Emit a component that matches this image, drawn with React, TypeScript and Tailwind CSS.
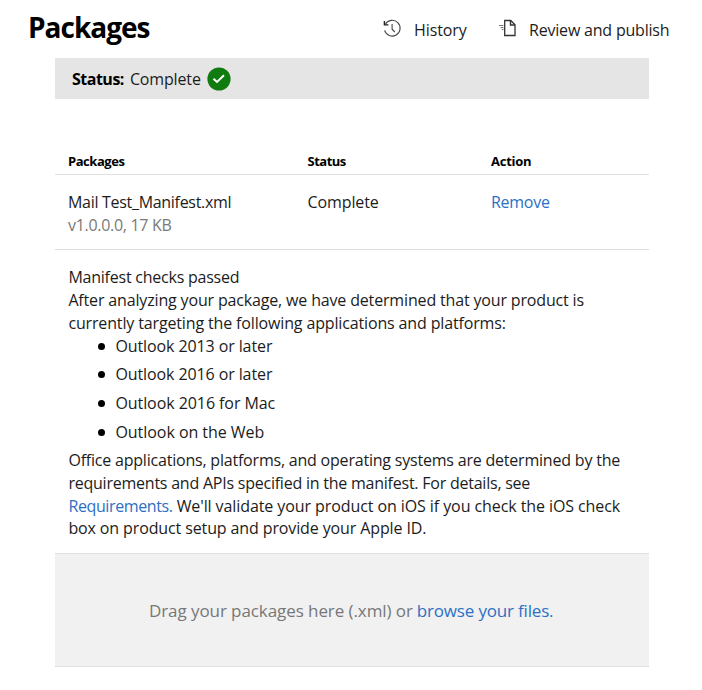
const platforms = [
  { name: 'Outlook 2013 or later', tracking: 'tracking-[-0.1px]' },
  { name: 'Outlook 2016 or later', tracking: 'tracking-[-0.1px]' },
  { name: 'Outlook 2016 for Mac', tracking: 'tracking-[-0.07px]' },
  { name: 'Outlook on the Web', tracking: 'tracking-[-0.04px]' },
];

function HistoryIcon() {
  return (
    <svg className="h-[19px] w-[19px]" viewBox="0 0 19 19" fill="none" stroke="#444" strokeWidth="1.1">
      <path d="M2.4 5.2A7.9 7.9 0 1 1 1.6 11.4" />
      <path d="M1.4 2v3.9h4" stroke="#222" strokeWidth="1.4" />
      <path d="M9.1 5v5.2l2.7 2.8" />
    </svg>
  );
}

function PublishIcon() {
  return (
    <svg className="h-[18px] w-[18px]" viewBox="0 0 18 18" fill="none" stroke="#333">
      <path d="M5.7 1.5h6l4.3 4.3v10.7H5.7z" strokeWidth="1.3" />
      <path d="M11.5 1.5V6H16" strokeWidth="1.4" />
      <path d="M0 6.5h4.5M1.5 8.5h3M2.7 10.5h1.8" stroke="#777" strokeWidth="1" />
    </svg>
  );
}

function CompleteBadge() {
  return (
    <svg className="ml-[6px] h-[24px] w-[24px]" viewBox="0 0 24 24" fill="none">
      <circle cx="12" cy="12" r="11.6" fill="#107c10" />
      <path d="M6.5 11.7l3.5 3.3 7-6.8" stroke="#fff" strokeWidth="1.9" />
    </svg>
  );
}

export default function App() {
  return (
    <div className="h-[690px] w-[702px] overflow-hidden bg-white font-['Open_Sans','Noto_Sans',sans-serif] text-[16px] leading-[22.7px] whitespace-nowrap text-[#1c1c1c]">
      <header className="flex h-[58px] items-start">
        <h1 className="ml-[28px] w-[355px] pt-[7px] text-[28px] leading-[40px] font-bold tracking-[-1px] text-black">
          Packages
        </h1>
        <div className="flex pt-[19px]">
          <HistoryIcon />
        </div>
        <span className="ml-[12px] w-[85px] pt-[19px] tracking-[-0.1px]">History</span>
        <div className="flex pt-[19px]">
          <PublishIcon />
        </div>
        <span className="ml-[12px] pt-[19px] tracking-[-0.2px]">Review and publish</span>
      </header>

      <main className="ml-[55px] w-[594px]">
        <div className="flex h-[41px] items-center bg-[#e5e5e5] pl-[17px]">
          <span className="pt-[2px] font-bold tracking-[-0.5px] text-black">Status:</span>
          <span className="ml-[6px] pt-[2px] tracking-[-0.15px]">Complete</span>
          <CompleteBadge />
        </div>

        <div className="mt-[48px] grid h-[28px] grid-cols-[239.5px_183.5px_1fr] border-b border-[#e1e1e1] pl-[13px] text-[13px] leading-[28px] font-bold text-black">
          <span className="tracking-[-0.45px]">Packages</span>
          <span className="tracking-[-0.5px]">Status</span>
          <span className="tracking-[-0.25px]">Action</span>
        </div>

        <div className="grid h-[75px] grid-cols-[239.5px_183.5px_1fr] border-b border-[#dcdcdc] pt-[16px] pl-[13px]">
          <div>
            <div className="tracking-[-0.3px]">Mail Test_Manifest.xml</div>
            <div className="tracking-[-0.3px] text-[#7a7a7a]">v1.0.0.0, 17 KB</div>
          </div>
          <span className="tracking-[-0.1px]">Complete</span>
          <a className="tracking-[-0.27px] text-[#2b70c4]">Remove</a>
        </div>

        <section className="h-[303px] pt-[16.4px] pl-[13.4px]">
          <p className="tracking-[-0.23px]">Manifest checks passed</p>
          <p className="tracking-[-0.16px]">After analyzing your package, we have determined that your product is</p>
          <p className="tracking-[-0.145px]">currently targeting the following applications and platforms:</p>
          <ul>
            {platforms.map((platform) => (
              <li key={platform.name} className="flex h-[28.7px]">
                <span className="mt-[8px] ml-[30px] h-[7px] w-[7px] rounded-full bg-black" />
                <span className={`ml-[10px] ${platform.tracking}`}>{platform.name}</span>
              </li>
            ))}
          </ul>
          <p className="tracking-[-0.205px]">
            Office applications, platforms, and operating systems are determined by the
          </p>
          <p className="tracking-[-0.23px]">requirements and APIs specified in the manifest. For details, see</p>
          <p>
            <a className="tracking-[-0.38px] text-[#2b70c4]">Requirements.</a>
            <span className="ml-[4px] tracking-[-0.085px]">
              We'll validate your product on iOS if you check the iOS check
            </span>
          </p>
          <p className="tracking-[-0.12px]">box on product setup and provide your Apple ID.</p>
        </section>

        <div className="flex h-[114px] border-y border-[#dfdfdf] bg-[#f1f1f1] pt-[45px] pl-[94px] text-[17px] leading-[24px]">
          <span className="tracking-[-0.08px] text-[#777]">Drag your packages here (.xml) or</span>
          <a className="ml-[4px] tracking-[-0.18px] text-[#2b70c4]">browse your files.</a>
        </div>
      </main>
    </div>
  );
}
